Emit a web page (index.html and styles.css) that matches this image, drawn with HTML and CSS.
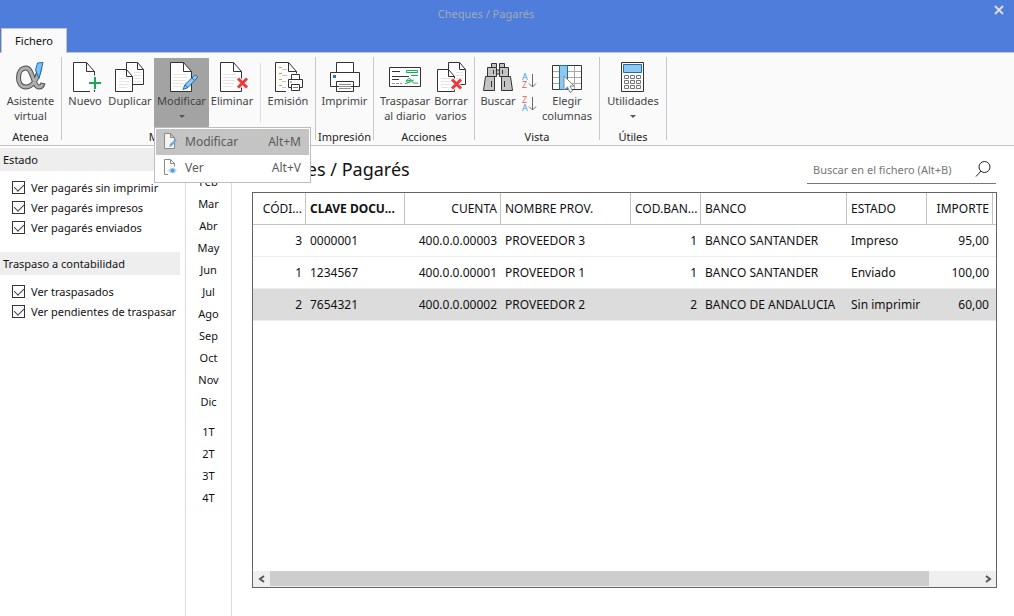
FILE: index.html
```html
<!DOCTYPE html>
<html lang="es">
<head>
<meta charset="utf-8">
<title>Cheques / Pagarés</title>
<link rel="stylesheet" href="styles.css">
</head>
<body>
<svg class="defs" aria-hidden="true">
  <symbol id="page" viewBox="0 0 32 32">
    <path d="M17.5 1.5h-13v29h21v-20z" fill="#fff"/>
    <path d="M7 13.5h13M7 16.5h14M7 19.5h12M7 22.5h11M7 25.5h9" stroke="#e4e4e4"/>
    <path d="M25.500 30.500h-21v-29h13l8 9zM17.500 1.500v9h8" fill="none" stroke="#333"/>
  </symbol>
  <symbol id="pages" viewBox="0 0 32 32">
    <path d="M12.500 8.500v-7h11l6 7v15h-11" fill="#fff" stroke="#333"/>
    <path d="M23.500 1.500v7h6" fill="none" stroke="#333"/>
    <path d="M20 11.500h7M20 14.500h7M20 17.500h7M20 20.500h7" stroke="#e4e4e4"/>
    <path d="M1.500 8.500h11l6 7v15h-17zM12.500 8.500v7h6" fill="#fff" stroke="#333"/>
    <path d="M5 17.500h10M5 20.500h10M5 23.500h10M5 26.500h8" stroke="#e4e4e4"/>
  </symbol>
</svg>

<header class="titlebar">
  <h1 class="window-title">Cheques / Pagarés</h1>
  <button class="tab" type="button">Fichero</button>
  <button class="close" type="button" aria-label="Cerrar">
    <svg width="10" height="10" viewBox="0 0 10 10"><path d="M1 1l8 8M9 1l-8 8" stroke="#dedede" stroke-width="2"/></svg>
  </button>
</header>

<nav class="ribbon">
  <section class="group group-atenea">
    <div class="tools">
      <button class="tool w-wide" type="button">
        <svg class="icon" viewBox="0 0 32 32" fill="none">
          <path d="M25 6c-3 13-8 20-14 20c-5 0-7.500-4-7.500-9.500s3-9.500 7.500-9.500c7 0 7 19 13 19c2 0 3.500-1 4-4" stroke="#4d4d4d" stroke-width="5"/>
          <path d="M25 7c-3 12-8 19-14 19c-5 0-7.500-4-7.500-9.500s3-9.500 7.500-9.500c7 0 7 19 13 19c2 0 3-1 3.800-3" stroke="#adadad" stroke-width="3"/>
          <path d="M20.500 9l2-7 5.500-.500-4 16z" fill="#7fc0f0" stroke="#1c6fb5"/>
        </svg>
        <span>Asistente<br>virtual</span>
      </button>
    </div>
    <h2 class="group-name">Atenea</h2>
  </section>
  <i class="sep"></i>

  <section class="group group-edit">
    <div class="tools">
      <button class="tool w-44" type="button">
        <svg class="icon" viewBox="0 0 32 32" fill="none">
          <path d="M21 30.500h-16.500v-29h13l8 9v4M17.500 1.500v9h8M25.500 29v2" fill="#fff" stroke="#333"/>
          <path d="M26 16v12M20 22h12" stroke="#18a957" stroke-width="2"/>
        </svg>
        <span>Nuevo</span>
      </button>
      <button class="tool w-46" type="button">
        <svg class="icon"><use href="#pages"/></svg>
        <span>Duplicar</span>
      </button>
      <div class="dropdown">
        <button class="tool pressed" type="button" aria-expanded="true">
          <svg class="icon" viewBox="0 0 32 32">
            <use href="#page"/>
            <path d="M17 28.500l2-5 9.500-9a1.800 1.800 0 0 1 2.500 2.500l-9 9.500z" fill="#8cc8f2" stroke="#1a6cae"/>
            <path d="M19 24l3 2.500M26 17l2.500 2.500" stroke="#1a6cae"/>
          </svg>
          <span>Modificar</span>
          <i class="caret"></i>
        </button>
        <div class="menu" role="menu">
          <button class="menu-item active" type="button" role="menuitem">
            <svg width="14" height="16" viewBox="0 0 14 16">
              <path d="M1.500.500h6l4 4v11h-10zM7.500.500v4h4" fill="#f4f4f4" stroke="#8a8a8a"/>
              <path d="M6 14l1-3 5.500-5 1.200 1.500-5 5.500z" fill="#6fa9d4"/>
            </svg>
            <span>Modificar</span><kbd>Alt+M</kbd>
          </button>
          <button class="menu-item" type="button" role="menuitem">
            <svg width="14" height="16" viewBox="0 0 14 16">
              <path d="M5 15.500h-3.500v-15h6l4 4v3M7.500.500v4h4" fill="none" stroke="#8a8a8a"/>
              <path d="M5 11.500q4.500-6 9 0q-4.500 6-9 0z" fill="#b9d7ec"/>
              <circle cx="9.500" cy="11.500" r="2" fill="#5f9fce"/>
            </svg>
            <span>Ver</span><kbd>Alt+V</kbd>
          </button>
        </div>
      </div>
      <button class="tool w-46" type="button">
        <svg class="icon" viewBox="0 0 32 32">
          <use href="#page"/>
          <path d="M22 17.500l9 9M31 17.500l-9 9" stroke="#fafafa" stroke-width="5"/>
          <path d="M22 17.500l9 9M31 17.500l-9 9" stroke="#ee3a36" stroke-width="3"/>
        </svg>
        <span>Eliminar</span>
      </button>
      <i class="inner-sep"></i>
      <button class="tool w-44" type="button">
        <svg class="icon" viewBox="0 0 32 32" fill="none">
          <path d="M14 30.500h-10.500v-29h13l8 9v2M16.500 1.500v9h8" fill="#fff" stroke="#333"/>
          <path d="M7 6.500h3M7 12.500h3M7 18.500h3M7 24.500h3" stroke="#f0962e"/>
          <path d="M10 8.500h5M10 14.500h5M10 20.500h4M10 26.500h4" stroke="#c4c4c4"/>
          <path d="M19.500 18.500v-5h8v5M19.500 26.500h-3v-8h14v8h-3M19.500 23.500h8v6h-8z" fill="#fff" stroke="#333"/>
          <path d="M21 26.500h5" stroke="#777"/><path d="M18 21h2" stroke="#1a7fc9"/>
        </svg>
        <span>Emisión</span>
      </button>
    </div>
    <h2 class="group-name">Mantenimiento</h2>
  </section>
  <i class="sep"></i>

  <section class="group group-print">
    <div class="tools">
      <button class="tool w-wide" type="button">
        <svg class="icon" viewBox="0 0 32 32">
          <path d="M7.500 11.500v-10h17v10M1.500 11.500h29v14h-29zM7.500 20.500h17v10h-17z" fill="#fff" stroke="#333"/>
          <path d="M4 14h3v3h-3z" fill="#1a7fc9"/>
          <path d="M10 23.500h12M10 25.500h12M10 27.500h12" stroke="#8d8d8d"/>
        </svg>
        <span>Imprimir</span>
      </button>
    </div>
    <h2 class="group-name">Impresión</h2>
  </section>
  <i class="sep"></i>

  <section class="group group-actions">
    <div class="tools">
      <button class="tool w-50" type="button">
        <svg class="icon" viewBox="0 0 32 32" fill="none">
          <path d="M.500 6.500h31v19h-31z" fill="#fff" stroke="#333"/>
          <path d="M3 10.500h8M3 15.500h17M3 18.500h7" stroke="#333"/>
          <path d="M3 22.500h3M7 22.500h3M11 22.500h2" stroke="#999"/>
          <path d="M17.500 9.500h11v2h-11zM22 14.500h7M16 22.500c5 0 7-6 4-5s-3 5 0 4 5-4 4-2-1 3 5 2.500M17 20l6-1" stroke="#18a957"/>
        </svg>
        <span>Traspasar<br>al diario</span>
      </button>
      <button class="tool w-42" type="button">
        <svg class="icon" viewBox="0 0 32 32">
          <use href="#pages" x="1"/>
          <path d="M17 18.500l9 9M26 18.500l-9 9" stroke="#fafafa" stroke-width="5"/>
          <path d="M17 18.500l9 9M26 18.500l-9 9" stroke="#ee3a36" stroke-width="3"/>
        </svg>
        <span>Borrar<br>varios</span>
      </button>
    </div>
    <h2 class="group-name">Acciones</h2>
  </section>
  <i class="sep"></i>

  <section class="group group-view">
    <div class="tools">
      <button class="tool w-36" type="button">
        <svg class="icon" viewBox="0 0 32 32" fill="#c4c4c4" stroke="#333">
          <path d="M9.500 2.500h5v4h-5zM17.500 2.500h5v4h-5zM14.500 9h3v4h-3z"/>
          <path d="M5.500 6.500h9v9h-9zM17.500 6.500h9v9h-9z"/>
          <path d="M3.500 15.500h9v14h-11zM19.500 15.500h9l2 14h-11z"/>
          <path d="M11.500 9v4M20.500 9v4M9.500 20v6M22.500 20v6"/>
        </svg>
        <span>Buscar</span>
      </button>
      <div class="sorts">
        <button class="sort" type="button" aria-label="Orden ascendente">
          <svg width="16" height="18" viewBox="0 0 16 18" fill="none">
            <text class="sort-a" x="1" y="8">A</text><text class="sort-z" x="1" y="16">Z</text>
            <path d="M11.500 2v13M8 11.500l3.500 3.500 3.500-3.500" stroke="#6b6b6b"/>
          </svg>
        </button>
        <button class="sort" type="button" aria-label="Orden descendente">
          <svg width="16" height="18" viewBox="0 0 16 18" fill="none">
            <text class="sort-z" x="1" y="8">Z</text><text class="sort-a" x="1" y="16">A</text>
            <path d="M11.500 2v13M8 11.500l3.500 3.500 3.500-3.500" stroke="#6b6b6b"/>
          </svg>
        </button>
      </div>
      <button class="tool w-54" type="button">
        <svg class="icon" viewBox="0 0 32 32" fill="none">
          <path d="M1.500 4.500h29v24h-29z" fill="#fff"/>
          <path d="M2 10.500h28M2 16.500h28M2 22.500h28M23.500 5v23" stroke="#a8a8a8"/>
          <path d="M1.500 4.500h29v24h-29z" stroke="#333"/>
          <path d="M8.500 4.500h8v24h-8z" fill="#8dc8f3" stroke="#1b6dad"/>
          <path d="M13 15v14l3.500-3 2.500 5.500 2.500-1.500-2.500-5h4z" fill="#fff" stroke="#888"/>
        </svg>
        <span>Elegir<br>columnas</span>
      </button>
    </div>
    <h2 class="group-name">Vista</h2>
  </section>
  <i class="sep"></i>

  <section class="group group-utils">
    <div class="tools">
      <button class="tool w-wide" type="button">
        <svg class="icon" viewBox="0 0 32 32" fill="#fff">
          <path d="M4.500 1.500h22v29h-22z" stroke="#333"/>
          <path d="M6.500 3.500h18v8h-18z" fill="#8dc8f3" stroke="#1b6dad"/>
          <path d="M7.500 14.500h4v3h-4zM13.500 14.500h4v3h-4zM19.500 14.500h4v3h-4zM7.500 19.500h4v3h-4zM13.500 19.500h4v3h-4zM19.500 19.500h4v3h-4zM7.500 24.500h4v3h-4zM13.500 24.500h4v3h-4zM19.500 24.500h4v3h-4z" stroke="#777"/>
        </svg>
        <span>Utilidades</span>
        <i class="caret"></i>
      </button>
    </div>
    <h2 class="group-name">Útiles</h2>
  </section>
  <i class="sep"></i>
</nav>

<div class="workspace">
  <aside class="filters">
    <section class="filter">
      <h3>Estado</h3>
      <label><input type="checkbox" checked>Ver pagarés sin imprimir</label>
      <label><input type="checkbox" checked>Ver pagarés impresos</label>
      <label><input type="checkbox" checked>Ver pagarés enviados</label>
    </section>
    <section class="filter">
      <h3>Traspaso a contabilidad</h3>
      <label><input type="checkbox" checked>Ver traspasados</label>
      <label><input type="checkbox" checked>Ver pendientes de traspasar</label>
    </section>
  </aside>

  <div class="periods">
    <div class="period-list">
      <button type="button">Ene</button><button type="button">Feb</button><button type="button">Mar</button>
      <button type="button">Abr</button><button type="button">May</button><button type="button">Jun</button>
      <button type="button">Jul</button><button type="button">Ago</button><button type="button">Sep</button>
      <button type="button">Oct</button><button type="button">Nov</button><button type="button">Dic</button>
    </div>
    <div class="period-list">
      <button type="button">1T</button><button type="button">2T</button><button type="button">3T</button><button type="button">4T</button>
    </div>
  </div>

  <main class="content">
    <div class="content-head">
      <h2 class="content-title">Cheques / Pagarés</h2>
      <div class="search">
        <input type="text" placeholder="Buscar en el fichero (Alt+B)" aria-label="Buscar en el fichero">
        <svg width="18" height="18" viewBox="0 0 18 18" fill="none" stroke="#222"><circle cx="10.500" cy="7" r="5.500"/><path d="M7 11l-5 5.500"/></svg>
      </div>
    </div>
    <div class="grid">
      <div class="grid-body">
        <table>
          <colgroup><col class="c-code"><col class="c-key"><col class="c-account"><col class="c-name"><col class="c-bankcode"><col class="c-bank"><col class="c-state"><col class="c-amount"><col></colgroup>
          <thead>
            <tr><th class="num">CÓDI...</th><th class="sorted">CLAVE DOCU...</th><th class="num">CUENTA</th><th>NOMBRE PROV.</th><th class="num">COD.BAN...</th><th>BANCO</th><th>ESTADO</th><th class="num">IMPORTE</th><th class="end"></th></tr>
          </thead>
          <tbody>
            <tr><td class="num">3</td><td>0000001</td><td class="num">400.0.0.00003</td><td>PROVEEDOR 3</td><td class="num">1</td><td>BANCO SANTANDER</td><td>Impreso</td><td class="num">95,00</td><td class="end"></td></tr>
            <tr><td class="num">1</td><td>1234567</td><td class="num">400.0.0.00001</td><td>PROVEEDOR 1</td><td class="num">1</td><td>BANCO SANTANDER</td><td>Enviado</td><td class="num">100,00</td><td class="end"></td></tr>
            <tr class="selected"><td class="num">2</td><td>7654321</td><td class="num">400.0.0.00002</td><td>PROVEEDOR 2</td><td class="num">2</td><td>BANCO DE ANDALUCIA</td><td>Sin imprimir</td><td class="num">60,00</td><td class="end"></td></tr>
          </tbody>
        </table>
      </div>
      <div class="hscroll">
        <button type="button" aria-label="Desplazar a la izquierda"><svg width="8" height="8" viewBox="0 0 8 8" fill="none"><path d="M6 1l-4 3 4 3" stroke="#555" stroke-width="2"/></svg></button>
        <div class="track"><div class="thumb"></div></div>
        <button type="button" aria-label="Desplazar a la derecha"><svg width="8" height="8" viewBox="0 0 8 8" fill="none"><path d="M2 1l4 3-4 3" stroke="#555" stroke-width="2"/></svg></button>
      </div>
    </div>
  </main>
</div>
</body>
</html>
```

FILE: styles.css
```css
* { box-sizing: border-box; }

body {
  margin: 0;
  min-height: 100vh;
  display: flex;
  flex-direction: column;
  background: #fff;
  color: #111;
  font-family: "Noto Sans", "Open Sans", sans-serif;
  font-size: 11px;
  line-height: 15px;
}

h1, h2, h3 { margin: 0; font-weight: 400; }

button {
  margin: 0;
  padding: 0;
  border: 0;
  background: none;
  color: inherit;
  font: inherit;
}

svg { display: block; flex: none; }
.defs { position: absolute; width: 0; height: 0; }

/* Title bar */
.titlebar {
  display: grid;
  grid-template-columns: 1fr auto 1fr;
  grid-template-rows: 28px 24px;
  background: #4e7ddb;
  border-bottom: 1px solid #c3c3c3;
}
.window-title {
  grid-column: 2;
  grid-row: 1;
  align-self: center;
  margin-right: 42px;
  padding-bottom: 2px;
  color: #a4a9b5;
  font-size: 11px;
}
.tab {
  grid-column: 1;
  grid-row: 2;
  justify-self: start;
  width: 66px;
  margin: 0 0 -1px 1px;
  padding-bottom: 2px;
  background: #fafafa;
  border: 1px solid #c3c3c3;
  border-bottom: 0;
}
.close {
  grid-column: 3;
  grid-row: 1;
  justify-self: end;
  align-self: start;
  padding: 5px 10px;
}

/* Ribbon */
.ribbon {
  display: flex;
  background: #fafafa;
  border-bottom: 1px solid #c3c3c3;
}
.group { padding-top: 5px; }
.group-atenea { width: 61px; }
.group-edit { width: 253px; }
.group-print { width: 57px; }
.group-actions { width: 100px; }
.group-view { width: 124px; }
.group-utils { width: 66px; }
.group-edit .tools { padding-left: 1px; }
.group-actions .tools { padding-left: 6px; }
.group-view .tools { padding-left: 5px; }
.sep { width: 1px; margin: 4px 0 5px; background: #c8c8c8; }
.inner-sep { width: 1px; margin: 5px; background: #dcdcdc; }
.tools { display: flex; height: 69px; }
.tool {
  display: flex;
  flex-direction: column;
  align-items: center;
  flex: none;
  height: 69px;
  padding-top: 3px;
  color: #444;
  white-space: nowrap;
}
.icon { width: 32px; height: 32px; overflow: visible; }
.w-wide { width: 100%; }
.w-36 { width: 36px; }
.w-42 { width: 42px; }
.w-44 { width: 44px; }
.w-46 { width: 46px; }
.w-50 { width: 50px; }
.w-54 { width: 54px; }
.pressed { width: 55px; background: #a3a3a3; }
.caret {
  margin-top: 7px;
  border: 3px solid transparent;
  border-top-color: #555;
  border-bottom: 0;
}
.group-name {
  height: 18px;
  padding-top: 2px;
  font-size: 11px;
  text-align: center;
  white-space: nowrap;
  color: #222;
}
.sorts { display: flex; flex-direction: column; gap: 5px; padding: 14px 3px 0 5px; }
.sorts svg { overflow: visible; }
.sort-a, .sort-z { font: 9px "Open Sans", sans-serif; }
.sort-a { fill: #3d9bdc; }
.sort-z { fill: #ee5a55; }

/* Drop-down menu */
.dropdown { position: relative; margin-left: 1px; }
.menu {
  position: absolute;
  top: 100%;
  left: 0;
  z-index: 2;
  width: 157px;
  padding: 1px;
  background: #fff;
  border: 1px solid #bdbdbd;
}
.menu-item {
  display: flex;
  align-items: center;
  width: 100%;
  height: 26px;
  padding: 0 8px 2px 7px;
  color: #5a5a5a;
  font-size: 12px;
  text-align: left;
}
.menu-item span { flex: 1; padding-left: 8px; }
.menu-item kbd { font: inherit; }
.active { background: #c4c4c4; }

/* Filters */
.workspace { flex: 1; display: flex; }
.filters { flex: none; width: 185px; padding: 2px 5px 0 0; }
.filter { margin-bottom: 15px; }
.filter h3 {
  margin-bottom: 6px;
  padding: 4px 3px;
  background: #eee;
  font-size: 11px;
}
.filter label {
  display: flex;
  align-items: center;
  gap: 6px;
  height: 20px;
  padding-left: 12px;
  white-space: nowrap;
}
.filter input {
  appearance: none;
  display: grid;
  justify-content: center;
  width: 13px;
  height: 13px;
  margin: 0;
  border: 1px solid #333;
  background: #fff;
}
.filter input:checked::before {
  content: "";
  width: 5px;
  height: 8px;
  border: solid #444;
  border-width: 0 1px 1px 0;
  transform: rotate(45deg);
}

/* Months and quarters */
.periods {
  flex: none;
  width: 47px;
  padding-top: 2px;
  border: solid #dcdcdc;
  border-width: 0 1px;
}
.period-list { display: flex; flex-direction: column; margin-bottom: 8px; }
.period-list button { height: 22px; }

/* Content */
.content {
  flex: 1;
  min-width: 0;
  display: flex;
  flex-direction: column;
  padding: 11px 17px 28px 20px;
}
.content-head { display: flex; justify-content: space-between; margin-bottom: 8px; }
.content-title { font-size: 18px; line-height: 24px; }
.search {
  display: flex;
  align-items: center;
  width: 189px;
  height: 27px;
  margin-right: 1px;
  padding: 0 4px 2px 6px;
  border-bottom: 1px solid #777;
}
.search input {
  flex: 1;
  min-width: 0;
  padding: 0;
  border: 0;
  outline: 0;
  background: none;
  font: inherit;
}
.search input::placeholder { color: #767676; opacity: 1; }

.grid {
  flex: 1;
  display: flex;
  flex-direction: column;
  border: 1px solid #646464;
}
.grid-body { flex: 1; }
table {
  width: 100%;
  table-layout: fixed;
  border-collapse: separate;
  border-spacing: 0;
  font-size: 12px;
}
.c-code { width: 53px; }
.c-key { width: 99px; }
.c-account { width: 96px; }
.c-name { width: 130px; }
.c-bankcode { width: 70px; }
.c-bank { width: 146px; }
.c-state { width: 80px; }
.c-amount { width: 66px; }
th, td {
  height: 32px;
  padding: 0 4px;
  white-space: nowrap;
  text-align: left;
  font-weight: 400;
  border-bottom: 1px solid #ededed;
}
th { padding-right: 3px; border-right: 1px solid #c3c3c3; border-bottom-color: #c3c3c3; }
.num { text-align: right; }
.sorted { font-weight: 700; }
.end { padding: 0; border-right: 0; }
.selected td { background: #dcdcdc; }

.hscroll { display: flex; height: 16px; background: #efefef; }
.hscroll button { display: grid; place-items: center; width: 17px; }
.track { flex: 1; padding-bottom: 1px; }
.thumb { width: 93%; height: 100%; background: #cdcdcd; }
```
